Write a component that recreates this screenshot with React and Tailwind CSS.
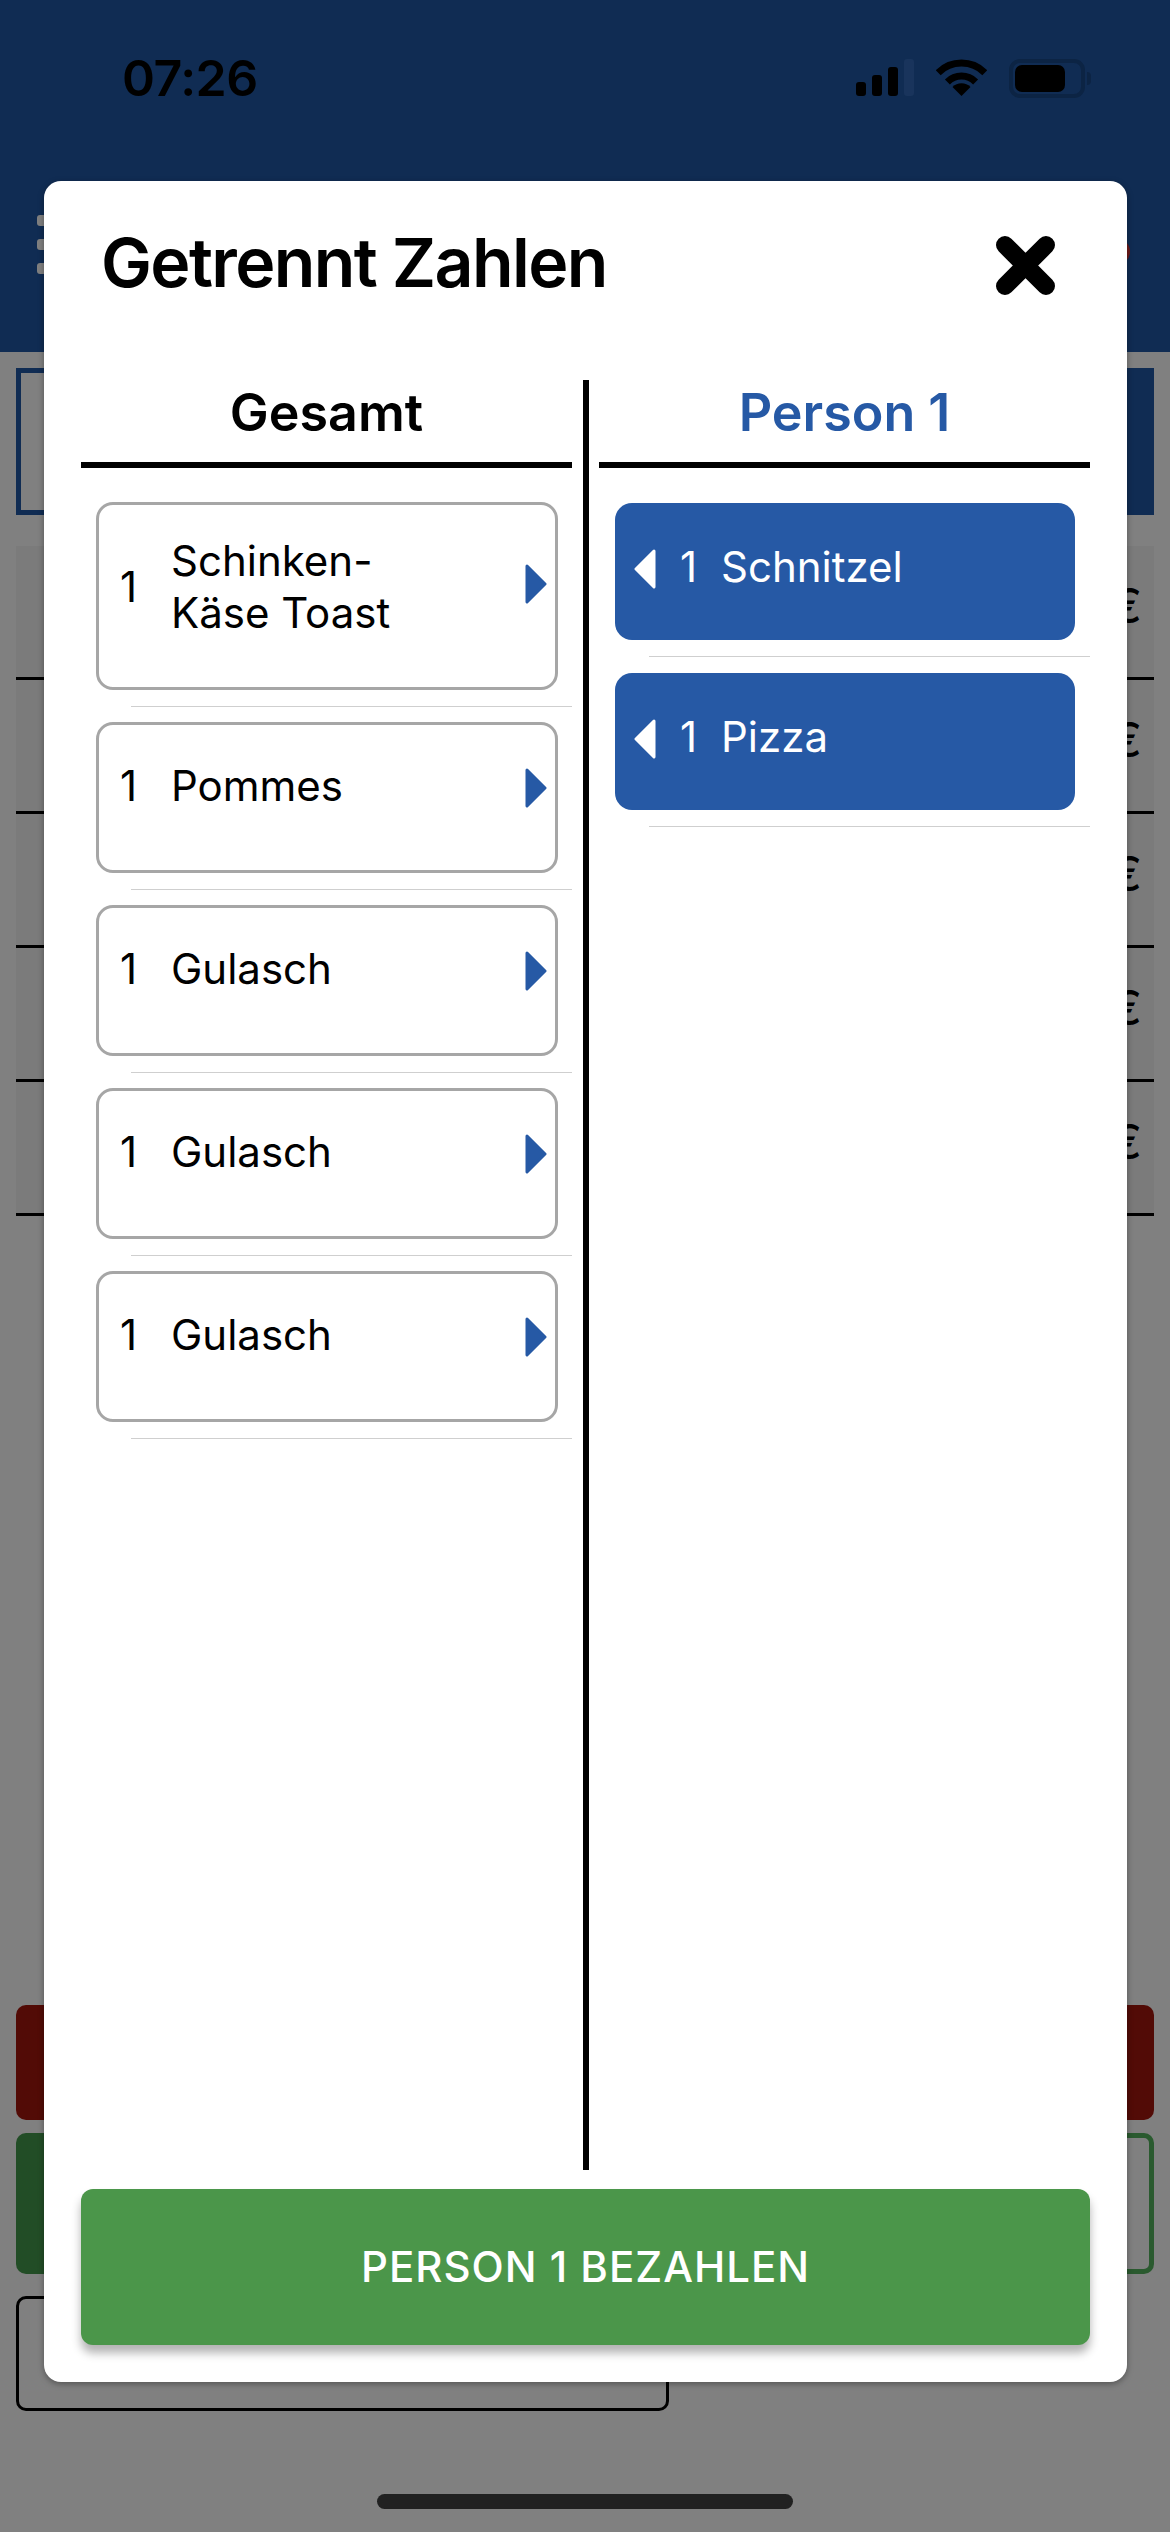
const font = { fontFamily: 'Inter, "Liberation Sans", sans-serif' }

const totalItems = [
  { id: 1, name: ['Schinken-', 'Käse Toast'], tall: true },
  { id: 2, name: ['Pommes'] },
  { id: 3, name: ['Gulasch'] },
  { id: 4, name: ['Gulasch'] },
  { id: 5, name: ['Gulasch'] },
]

const personItems = [
  { id: 1, name: 'Schnitzel' },
  { id: 2, name: 'Pizza' },
]

function Arrow({ left, className }) {
  return (
    <svg viewBox="0 0 22 40" className={className} fill="currentColor">
      {left ? (
        <path d="M20 2 L2 20 L20 38 Z" stroke="currentColor" strokeWidth="3" strokeLinejoin="round" />
      ) : (
        <path d="M2 2 L20 20 L2 38 Z" stroke="currentColor" strokeWidth="3" strokeLinejoin="round" />
      )}
    </svg>
  )
}

function StatusBar() {
  return (
    <div className="flex h-[150px] items-start justify-between pl-[122px] pr-[79px] pt-[48px] text-black">
      <span className="text-[50px] font-semibold leading-[60px] tracking-[-0.5px]">07:26</span>
      <div className="flex items-start pt-[11px]">
        {/* signal */}
        <div className="flex h-[37px] items-end gap-[6px]">
          <div className="h-[14px] w-[10px] rounded-[3px] bg-black" />
          <div className="h-[21px] w-[10px] rounded-[3px] bg-black" />
          <div className="h-[29px] w-[10px] rounded-[3px] bg-black" />
          <div className="h-[37px] w-[10px] rounded-[3px] bg-[#19345c]" />
        </div>
        {/* wifi */}
        <svg viewBox="0 0 51 37" className="ml-[22px] h-[37px] w-[51px]" fill="none" stroke="black" strokeWidth="7">
          <path d="M2.2 13.7 A33 33 0 0 1 48.8 13.7" />
          <path d="M11.4 22.9 A20 20 0 0 1 39.6 22.9" />
          <path d="M25.5 37 L16.5 28 A12.7 12.7 0 0 1 34.5 28 Z" fill="black" stroke="none" />
        </svg>
        {/* battery */}
        <div className="ml-[22px] h-[39px] w-[76px] rounded-[11px] border-[4px] border-[#0c2444] p-[2px]">
          <div className="h-full w-[50px] rounded-[7px] bg-black" />
        </div>
        <div className="ml-[2px] mt-[13px] h-[13px] w-[4px] rounded-r-full bg-[#0c2444]" />
      </div>
    </div>
  )
}

// what sits behind the dialog, dimmed
function Backdrop() {
  return (
    <div className="flex min-h-[2532px] flex-col bg-[#808080]">
      <div className="h-[352px] bg-[#102c53]">
        <StatusBar />
        <div className="flex items-start justify-between pl-[37px] pr-[40px] pt-[65px]">
          <div className="flex flex-col gap-[13px]">
            <div className="h-[11px] w-[30px] rounded-[3px] bg-[#808080]" />
            <div className="h-[11px] w-[30px] rounded-[3px] bg-[#808080]" />
            <div className="h-[11px] w-[30px] rounded-[3px] bg-[#808080]" />
          </div>
          <div className="mt-[23px] h-[27px] w-[28px] rounded-full bg-[#6e1a1a]" />
        </div>
      </div>

      <div className="mx-[16px] mt-[16px] flex h-[147px]">
        <div className="w-1/2 border-[5px] border-[#102c53]" />
        <div className="w-1/2 bg-[#102c53]" />
      </div>

      <div className="mx-[16px] mt-[31px] flex flex-col">
        {[0, 1, 2, 3, 4].map((row) => (
          <div
            key={row}
            className="flex h-[134px] items-center justify-end border-b-[3px] border-black bg-[#7b7b7b] pb-[12px] pr-[12px] text-[48px] text-black"
          >
            €
          </div>
        ))}
      </div>

      <div className="mx-[16px] mt-[789px] h-[115px] rounded-[10px] bg-[#520b06]" />
      <div className="mx-[16px] mt-[13px] flex h-[141px]">
        <div className="w-1/2 rounded-l-[10px] bg-[#224d26]" />
        <div className="w-1/2 rounded-r-[10px] border-[5px] border-[#2a5a2f]" />
      </div>
      <div className="ml-[16px] mt-[22px] h-[115px] w-[653px] rounded-[10px] border-[3px] border-black" />

      <div className="mx-auto mt-[83px] h-[15px] w-[416px] rounded-full bg-[#212121]" />
    </div>
  )
}

function TotalRow({ item }) {
  return (
    <div>
      <div
        className={`ml-[15px] w-[462px] rounded-[17px] border-[3px] border-[#a6a6a6] pl-[21px] pr-[8px] ${
          item.tall ? 'h-[188px] pt-[30px]' : 'h-[151px] pt-[35px]'
        }`}
      >
        <div className="flex items-center text-[42px] leading-[52px] text-black">
          <span className="w-[51px] shrink-0">1</span>
          <span className="flex-1">
            {item.name.map((line) => (
              <span key={line} className="block">{line}</span>
            ))}
          </span>
          <Arrow className={`h-[40px] w-[22px] text-[#2659a5] ${item.tall ? 'mb-[6px]' : 'mt-[3px]'}`} />
        </div>
      </div>
      <div className="ml-[50px] mt-[16px] h-[1px] bg-[#cfcfcf]" />
    </div>
  )
}

function PersonRow({ item }) {
  return (
    <div>
      <div className="ml-[16px] flex h-[137px] w-[460px] items-start rounded-[17px] bg-[#2659a5] pl-[18px] pt-[38px] text-[42px] leading-[51px] text-white">
        <Arrow left className="mt-[8px] h-[40px] w-[24px]" />
        <span className="ml-[23px] w-[41px]">1</span>
        <span>{item.name}</span>
      </div>
      <div className="ml-[50px] mt-[16px] h-[1px] bg-[#cfcfcf]" />
    </div>
  )
}

function Dialog() {
  return (
    <div className="absolute left-[44px] top-[181px] flex h-[2201px] w-[1083px] flex-col rounded-[17px] bg-white px-[37px] shadow-[0_2px_6px_rgba(0,0,0,0.35)]">
      <div className="flex h-[199px] items-start justify-between pl-[20px] pr-[34px] pt-[40px]">
        <h1 className="text-[68px] font-semibold leading-[82px] tracking-[-1.6px] text-black">Getrennt Zahlen</h1>
        <svg viewBox="0 0 61 61" className="mt-[14px] h-[61px] w-[61px]" stroke="black" strokeWidth="18" strokeLinecap="round">
          <path d="M10 10 L51 51 M51 10 L10 51" />
        </svg>
      </div>

      <div className="flex h-[1790px] justify-between">
        <div className="w-[491px]">
          <div className="flex h-[88px] items-start justify-center border-b-[6px] border-black pt-[3px] text-[52px] font-semibold leading-[60px] text-black">
            Gesamt
          </div>
          <div className="flex flex-col gap-[15px] pt-[34px]">
            {totalItems.map((item) => (
              <TotalRow key={item.id} item={item} />
            ))}
          </div>
        </div>

        <div className="w-[6px] bg-black" />

        <div className="w-[491px]">
          <div className="flex h-[88px] items-start justify-center border-b-[6px] border-black pt-[3px] text-[52px] font-semibold leading-[60px] text-[#2659a5]">
            Person 1
          </div>
          <div className="flex flex-col gap-[16px] pt-[35px]">
            {personItems.map((item) => (
              <PersonRow key={item.id} item={item} />
            ))}
          </div>
        </div>
      </div>

      <button className="mt-[19px] flex h-[156px] w-full items-start justify-center rounded-[12px] bg-[#4b964a] pt-[52px] text-[42px] font-medium leading-[52px] tracking-[1px] text-white shadow-[0_8px_10px_rgba(0,0,0,0.3)]">
        PERSON 1 BEZAHLEN
      </button>
    </div>
  )
}

export default function App() {
  return (
    <div className="relative h-[2532px] w-[1170px] overflow-hidden" style={font}>
      <Backdrop />
      <Dialog />
    </div>
  )
}
